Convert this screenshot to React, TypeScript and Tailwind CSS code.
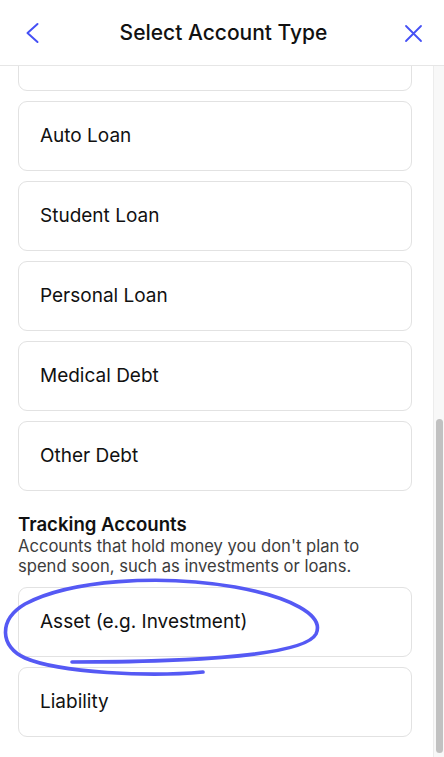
import { useLayoutEffect, useRef, useState } from "react";

const budget = ["Checking", "Savings", "Cash", "Credit Card", "Line of Credit"];
const loans = ["Mortgage", "Auto Loan", "Student Loan", "Personal Loan", "Medical Debt", "Other Debt"];
const tracking = ["Asset (e.g. Investment)", "Liability"];

function Section({ title, desc, items, first }: { title: string; desc: string; items: string[]; first?: boolean }) {
  return (
    <section className={first ? "" : "mt-[21px]"}>
      <h2 className="text-[18.6px] leading-[24px] font-semibold text-[#111]">{title}</h2>
      <p className="text-[16.6px] leading-[20px] text-[#3d3d3d] pr-[24px]">{desc}</p>
      <div className="mt-[11px] flex flex-col gap-[10px]">
        {items.map((it) => (
          <button
            key={it}
            className="h-[70px] w-full rounded-[9px] border border-[#e2e2e2] bg-white px-[21px] text-left text-[19px] text-[#111]"
          >
            {it}
          </button>
        ))}
      </div>
    </section>
  );
}

export default function App() {
  const scrollRef = useRef<HTMLDivElement | null>(null);
  const [thumb, setThumb] = useState({ top: 0, height: 0 });

  function measure() {
    const el = scrollRef.current;
    if (!el) return;
    const track = el.clientHeight;
    setThumb({
      top: (el.scrollTop / el.scrollHeight) * track,
      height: (el.clientHeight / el.scrollHeight) * track,
    });
  }

  useLayoutEffect(() => {
    const el = scrollRef.current;
    if (el) el.scrollTop = el.scrollHeight;
    measure();
  }, []);

  return (
    <div className="relative h-[757px] w-[444px] overflow-hidden bg-white font-['Inter',sans-serif]">
      <header className="grid h-[66px] grid-cols-[1fr_auto_1fr] items-center border-b border-[#e6e6e6] pl-[24px] pr-[21px]">
        <button aria-label="Back" className="justify-self-start text-[#4550f5]">
          <svg width="18" height="22" viewBox="0 0 18 22" fill="none">
            <path d="M13.5 2 L3.5 11 L13.5 20" stroke="currentColor" strokeWidth="2" strokeLinecap="round" strokeLinejoin="round" />
          </svg>
        </button>
        <h1 className="text-[21px] font-medium text-[#111]">Select Account Type</h1>
        <button aria-label="Close" className="justify-self-end text-[#4550f5]">
          <svg width="20" height="20" viewBox="0 0 20 20" fill="none">
            <path d="M3 3 L18 18 M18 3 L3 18" stroke="currentColor" strokeWidth="1.8" strokeLinecap="round" />
          </svg>
        </button>
      </header>

      <div className="flex h-[691px]">
        <div
          ref={scrollRef}
          onScroll={measure}
          className="flex-1 overflow-y-auto pl-[18px] pr-[21px] [scrollbar-width:none] [&::-webkit-scrollbar]:hidden"
        >
          <div className="pt-[24px] pb-[20px]">
            <p className="mb-[53px] text-[16.6px] leading-[20px] text-[#3d3d3d]">
              Choose the kind of account you want to add. You can change its nickname later, but not its type.
            </p>
            <Section
              first
              title="Budget Accounts"
              desc="Accounts that hold money you plan to spend or use to pay for things."
              items={budget}
            />
            <Section
              title="Mortgages and Loans"
              desc="Accounts for money you owe and want to pay down over time."
              items={loans}
            />
            <Section
              title="Tracking Accounts"
              desc="Accounts that hold money you don't plan to spend soon, such as investments or loans."
              items={tracking}
            />
          </div>
        </div>
        <div className="w-[11px] shrink-0 border-l border-[#ececec] bg-[#f8f8f8] pl-[2px] pr-[1px]">
          <div className="rounded-full bg-[#c1c1c1]" style={{ marginTop: thumb.top, height: thumb.height - 4 }} />
        </div>
      </div>

      <svg className="pointer-events-none absolute left-0 top-0" width="444" height="757" viewBox="0 0 444 757" fill="none">
        <path
          d="M203 672 C150 677 60 673 25 658 C0 647 -2 620 25 604 C70 580 160 574 235 587 C290 597 325 615 316 634 C305 655 200 662 72 662"
          stroke="#5559f4"
          strokeWidth="3.6"
          strokeLinecap="round"
          strokeLinejoin="round"
        />
      </svg>
    </div>
  );
}
